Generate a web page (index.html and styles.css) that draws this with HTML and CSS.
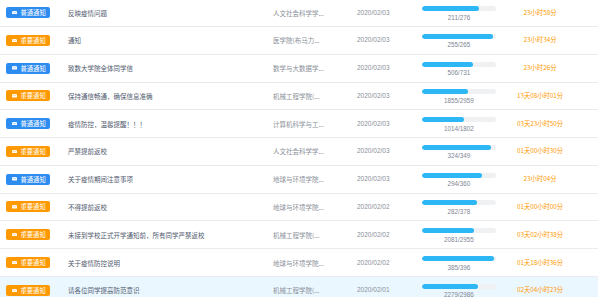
FILE: index.html
```html
<!DOCTYPE html>
<html lang="zh">
<head>
<meta charset="utf-8">
<link rel="stylesheet" href="styles.css">
</head>
<body>
<div class="table">
  <div class="row">
    <div class="cell c1"><span class="tag blue"><svg class="ico" viewBox="0 0 6 4"><rect x="0" y="0" width="6" height="4" rx="0.6" fill="#fff"/><path d="M0.4 0.5 L3 2.2 L5.6 0.5" fill="none" stroke="currentColor" stroke-width="0.5"/></svg>普通通知</span></div>
    <div class="cell c2">反映疫情问题</div>
    <div class="cell c3">人文社会科学学...</div>
    <div class="cell c4">2020/02/03</div>
    <div class="cell c5"><div class="bar"><div class="fill" style="width:76.4%"></div></div><div class="num">211/276</div></div>
    <div class="cell c6">23小时58分</div>
  </div>
  <div class="row">
    <div class="cell c1"><span class="tag orange"><svg class="ico" viewBox="0 0 6 4"><rect x="0" y="0" width="6" height="4" rx="0.6" fill="#fff"/><path d="M0.4 0.5 L3 2.2 L5.6 0.5" fill="none" stroke="currentColor" stroke-width="0.5"/></svg>重要通知</span></div>
    <div class="cell c2">通知</div>
    <div class="cell c3">医学院(布马力...</div>
    <div class="cell c4">2020/02/03</div>
    <div class="cell c5"><div class="bar"><div class="fill" style="width:96.2%"></div></div><div class="num">255/265</div></div>
    <div class="cell c6">23小时34分</div>
  </div>
  <div class="row">
    <div class="cell c1"><span class="tag blue"><svg class="ico" viewBox="0 0 6 4"><rect x="0" y="0" width="6" height="4" rx="0.6" fill="#fff"/><path d="M0.4 0.5 L3 2.2 L5.6 0.5" fill="none" stroke="currentColor" stroke-width="0.5"/></svg>普通通知</span></div>
    <div class="cell c2">致数大学院全体同学信</div>
    <div class="cell c3">数学与大数据学...</div>
    <div class="cell c4">2020/02/03</div>
    <div class="cell c5"><div class="bar"><div class="fill" style="width:69.2%"></div></div><div class="num">506/731</div></div>
    <div class="cell c6">23小时26分</div>
  </div>
  <div class="row">
    <div class="cell c1"><span class="tag orange"><svg class="ico" viewBox="0 0 6 4"><rect x="0" y="0" width="6" height="4" rx="0.6" fill="#fff"/><path d="M0.4 0.5 L3 2.2 L5.6 0.5" fill="none" stroke="currentColor" stroke-width="0.5"/></svg>重要通知</span></div>
    <div class="cell c2">保持通信畅通，确保信息准确</div>
    <div class="cell c3">机械工程学院(...</div>
    <div class="cell c4">2020/02/03</div>
    <div class="cell c5"><div class="bar"><div class="fill" style="width:62.7%"></div></div><div class="num">1855/2959</div></div>
    <div class="cell c6">13天08小时01分</div>
  </div>
  <div class="row">
    <div class="cell c1"><span class="tag blue"><svg class="ico" viewBox="0 0 6 4"><rect x="0" y="0" width="6" height="4" rx="0.6" fill="#fff"/><path d="M0.4 0.5 L3 2.2 L5.6 0.5" fill="none" stroke="currentColor" stroke-width="0.5"/></svg>普通通知</span></div>
    <div class="cell c2">疫情防控，温馨提醒！！！</div>
    <div class="cell c3">计算机科学与工...</div>
    <div class="cell c4">2020/02/03</div>
    <div class="cell c5"><div class="bar"><div class="fill" style="width:56.3%"></div></div><div class="num">1014/1802</div></div>
    <div class="cell c6">03天23小时50分</div>
  </div>
  <div class="row">
    <div class="cell c1"><span class="tag orange"><svg class="ico" viewBox="0 0 6 4"><rect x="0" y="0" width="6" height="4" rx="0.6" fill="#fff"/><path d="M0.4 0.5 L3 2.2 L5.6 0.5" fill="none" stroke="currentColor" stroke-width="0.5"/></svg>重要通知</span></div>
    <div class="cell c2">严禁提前返校</div>
    <div class="cell c3">人文社会科学学...</div>
    <div class="cell c4">2020/02/03</div>
    <div class="cell c5"><div class="bar"><div class="fill" style="width:92.8%"></div></div><div class="num">324/349</div></div>
    <div class="cell c6">01天00小时30分</div>
  </div>
  <div class="row">
    <div class="cell c1"><span class="tag blue"><svg class="ico" viewBox="0 0 6 4"><rect x="0" y="0" width="6" height="4" rx="0.6" fill="#fff"/><path d="M0.4 0.5 L3 2.2 L5.6 0.5" fill="none" stroke="currentColor" stroke-width="0.5"/></svg>普通通知</span></div>
    <div class="cell c2">关于疫情期间注意事项</div>
    <div class="cell c3">地球与环境学院...</div>
    <div class="cell c4">2020/02/03</div>
    <div class="cell c5"><div class="bar"><div class="fill" style="width:81.7%"></div></div><div class="num">294/360</div></div>
    <div class="cell c6">23小时04分</div>
  </div>
  <div class="row">
    <div class="cell c1"><span class="tag orange"><svg class="ico" viewBox="0 0 6 4"><rect x="0" y="0" width="6" height="4" rx="0.6" fill="#fff"/><path d="M0.4 0.5 L3 2.2 L5.6 0.5" fill="none" stroke="currentColor" stroke-width="0.5"/></svg>重要通知</span></div>
    <div class="cell c2">不得提前返校</div>
    <div class="cell c3">地球与环境学院...</div>
    <div class="cell c4">2020/02/02</div>
    <div class="cell c5"><div class="bar"><div class="fill" style="width:74.6%"></div></div><div class="num">282/378</div></div>
    <div class="cell c6">01天00小时00分</div>
  </div>
  <div class="row">
    <div class="cell c1"><span class="tag orange"><svg class="ico" viewBox="0 0 6 4"><rect x="0" y="0" width="6" height="4" rx="0.6" fill="#fff"/><path d="M0.4 0.5 L3 2.2 L5.6 0.5" fill="none" stroke="currentColor" stroke-width="0.5"/></svg>重要通知</span></div>
    <div class="cell c2">未接到学校正式开学通知前，所有同学严禁返校</div>
    <div class="cell c3">机械工程学院(...</div>
    <div class="cell c4">2020/02/02</div>
    <div class="cell c5"><div class="bar"><div class="fill" style="width:70.4%"></div></div><div class="num">2081/2955</div></div>
    <div class="cell c6">03天02小时38分</div>
  </div>
  <div class="row">
    <div class="cell c1"><span class="tag orange"><svg class="ico" viewBox="0 0 6 4"><rect x="0" y="0" width="6" height="4" rx="0.6" fill="#fff"/><path d="M0.4 0.5 L3 2.2 L5.6 0.5" fill="none" stroke="currentColor" stroke-width="0.5"/></svg>重要通知</span></div>
    <div class="cell c2">关于疫情防控说明</div>
    <div class="cell c3">地球与环境学院...</div>
    <div class="cell c4">2020/02/02</div>
    <div class="cell c5"><div class="bar"><div class="fill" style="width:97.2%"></div></div><div class="num">385/396</div></div>
    <div class="cell c6">01天18小时36分</div>
  </div>
  <div class="row active">
    <div class="cell c1"><span class="tag orange"><svg class="ico" viewBox="0 0 6 4"><rect x="0" y="0" width="6" height="4" rx="0.6" fill="#fff"/><path d="M0.4 0.5 L3 2.2 L5.6 0.5" fill="none" stroke="currentColor" stroke-width="0.5"/></svg>重要通知</span></div>
    <div class="cell c2">请各位同学提高防范意识</div>
    <div class="cell c3">机械工程学院(...</div>
    <div class="cell c4">2020/02/01</div>
    <div class="cell c5"><div class="bar"><div class="fill" style="width:76.3%"></div></div><div class="num">2279/2986</div></div>
    <div class="cell c6">02天04小时23分</div>
  </div>
</div>
</body>
</html>
```
FILE: styles.css
```css
html, body {
  margin: 0;
  padding: 0;
  background: #fff;
  overflow: hidden;
}
body {
  font-family: "Noto Sans CJK SC", "Noto Sans", sans-serif;
  font-size: 6.5px;
  color: #515a6e;
}
.table {
  margin-top: -0.78px;
}
.row {
  display: grid;
  grid-template-columns: 62px 205px 84px 65px 86px 76px;
  height: 27.78px;
  box-sizing: border-box;
  border-bottom: 1px solid #e9ebee;
  align-items: center;
}
.row.active {
  background: #ebf7ff;
}
.cell {
  padding: 0 6px;
  white-space: nowrap;
  overflow: hidden;
  line-height: 8px;
}
.c2 {
  color: #515a6e;
}
.c3, .c4 {
  color: #8a8f99;
}
.c4 {
  font-family: "Liberation Sans", "Noto Sans CJK SC", sans-serif;
}
.tag {
  display: inline-flex;
  align-items: center;
  gap: 3.5px;
  height: 11px;
  width: 44px;
  box-sizing: border-box;
  padding: 0 0 0 6px;
  border-radius: 2px;
  color: #fff;
  font-size: 6.3px;
  line-height: 11px;
}
.tag.blue {
  background: #2d8cf0;
}
.tag.orange {
  background: #ff9900;
}
.tag.blue .ico { color: #2d8cf0; }
.tag.orange .ico { color: #ff9900; }
.ico {
  width: 5px;
  height: 3.5px;
  flex: none;
}
.c5 {
  display: flex;
  flex-direction: column;
  align-items: stretch;
  padding-top: 1.5px;
}
.bar {
  height: 5px;
  background: #f0f1f3;
  border-radius: 3px;
  overflow: hidden;
}
.fill {
  height: 100%;
  background: #2db7f5;
  border-radius: 3px;
}
.num {
  text-align: center;
  color: #808695;
  font-family: "Liberation Sans", "Noto Sans CJK SC", sans-serif;
  font-size: 6.3px;
  line-height: 7px;
  margin-top: 2.5px;
}
.c6 {
  text-align: center;
  color: #ff9900;
  font-size: 6.3px;
  padding: 0;
}
```
